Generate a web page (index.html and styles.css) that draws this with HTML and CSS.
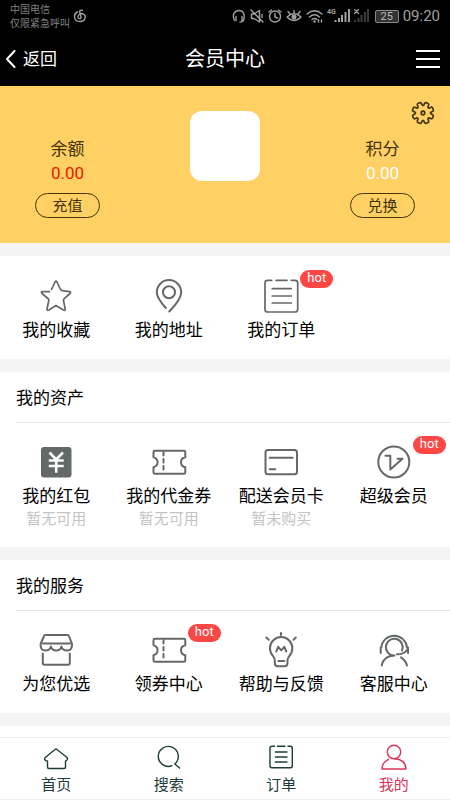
FILE: index.html
```html
<!DOCTYPE html>
<html lang="zh-CN">
<head>
<meta charset="utf-8">
<meta name="viewport" content="width=device-width, initial-scale=1">
<title>会员中心</title>
<link rel="stylesheet" href="styles.css">
</head>
<body>
<svg class="symbols" aria-hidden="true">
  <symbol id="ticket" viewBox="0 0 36 36">
    <path d="M4 6.7H33Q34.3 6.7 34.3 8V13.2Q30 14.2 30 18.2T34.3 23.2V28.4Q34.3 29.7 33 29.7H4Q2.5 29.7 2.5 28.4V23.2Q6.6 22 6.6 18.2T2.5 13.2V8Q2.5 6.7 4 6.7Z"/>
    <path d="M12.5 8V29" stroke-dasharray="3.5 3.5"/>
  </symbol>
</svg>

<div class="status">
  <div class="carrier"><span>中国电信</span><span>仅限紧急呼叫</span></div>
  <svg class="music" width="14" height="14" viewBox="0 0 14 14"><path d="M9.500 1.500C7.500.5 6.300 1.800 6.800 3.500L8 8.200C8.200 10.200 5 10.200 5 8C5 5.800 7 4.500 9 4.500C14 5.500 13 12.500 7 12.500C.5 12.500 0 5 4.500 3"/></svg>
  <div class="signals">
    <svg width="14" height="14" viewBox="0 0 14 14"><path d="M2.500 11.500C-.5 5 3 1.500 7 1.500S13.500 5 11.500 11.500Q10.500 13 8 13M4 7.500V11.500M10 7.500V11.500"/></svg>
    <svg width="14" height="14" viewBox="0 0 14 14"><path d="M1.500 5V9.500H4L9.500 13V1.500L4 5ZM1 1L13 13M12 5.500V8.500"/></svg>
    <svg width="14" height="14" viewBox="0 0 14 14"><circle cx="7" cy="7.500" r="5.500"/><path d="M7 4.500V8L9.500 9M1 3L3.500 1M13 3L10.500 1"/></svg>
    <svg width="16" height="14" viewBox="0 0 16 14"><path d="M1 8Q8 1.500 15 8Q8 15 1 8ZM8 4.500V1.500M4 5L2 2.500M12 5L14 2.500"/><circle class="solid" cx="8" cy="8" r="2.500"/></svg>
    <svg width="17" height="14" viewBox="0 0 17 14"><path d="M1 5Q8.500 -1.500 16 5M3.500 8Q8.500 3.500 13.500 8M6 10.500Q8.500 8.500 11 10.500"/><circle class="solid" cx="8.500" cy="12.500" r="1.200"/><path d="M12.500 11V13M15.500 11V13"/></svg>
    <svg width="23" height="14" viewBox="0 0 23 14"><text x="0" y="5">4G</text><path class="bar" d="M8.500 11V13M12 9V13M15 6V13M18.500 3V13M22 0V13"/></svg>
    <svg class="off" width="15" height="14" viewBox="0 0 15 14"><path class="bar" d="M1 11V13M4.500 9V13M7.500 6V13M11 3V13M14 0V13"/><path class="cross" d="M.5 .5L4.500 4.500M4.500 .5L.5 4.500"/></svg>
    <span class="battery">25</span>
    <time>09:20</time>
  </div>
</div>

<header class="topbar">
  <a class="back" href="#"><svg width="11" height="18" viewBox="0 0 11 18"><path d="M9.500 1L2 9L9.500 17"/></svg>返回</a>
  <h1>会员中心</h1>
  <button class="menu" type="button" aria-label="菜单"><svg width="24" height="18" viewBox="0 0 24 18"><path d="M0 1H24M0 9H24M0 17H24"/></svg></button>
</header>

<main>
  <section class="hero">
    <div class="account">
      <span>余额</span><strong class="money">0.00</strong><button type="button">充值</button>
    </div>
    <div class="avatar"></div>
    <div class="account">
      <span>积分</span><strong>0.00</strong><button type="button">兑换</button>
    </div>
    <button class="settings" type="button" aria-label="设置">
      <svg width="24" height="24" viewBox="-12 -12 24 24">
        <path id="tooth" transform="rotate(22.5)" d="M-2.900 -7C-1.600 -7.400 -2.400 -8.500 -2.200 -9.700Q-2 -10.900 0 -10.900T2.200 -9.700C2.400 -8.500 1.600 -7.400 2.900 -7"/>
        <use href="#tooth" transform="rotate(45)"/><use href="#tooth" transform="rotate(90)"/><use href="#tooth" transform="rotate(135)"/><use href="#tooth" transform="rotate(180)"/><use href="#tooth" transform="rotate(225)"/><use href="#tooth" transform="rotate(270)"/><use href="#tooth" transform="rotate(315)"/>
        <circle r="1.800"/></svg>
    </button>
  </section>

  <section class="group">
    <div class="grid first">
      <a class="item" href="#"><span class="icon"><svg class="thin" viewBox="0 0 36 36"><path d="M11.500 13.700L4.500 13.700Q2.500 14 4 15.500L10.500 21Q11 21.500 10.800 22.500L9 31Q9 33 11 32L18 27.500L25.500 32Q27.500 33 27.200 31L25.500 22.500Q25.300 21.500 26 20.800L32 15.500Q33.500 14 31.500 13.600L24 12.700L22.500 11.500L19 4Q18 2.200 17 4L13.500 11.500"/></svg></span>我的收藏</a>
      <a class="item" href="#"><span class="icon"><svg viewBox="0 0 36 36"><path d="M14.800 30Q5.800 20 5.800 14.300A12.200 12.200 0 0 1 30.200 14.300Q30.200 21.500 18.300 33.500"/><circle cx="18" cy="14.300" r="6"/></svg></span>我的地址</a>
      <a class="item" href="#"><span class="icon"><svg class="thin" viewBox="0 0 36 36"><path d="M8.700 2.300H4.500Q2 2.300 2 4.800V31.500Q2 34 4.500 34H32Q34.700 34 34.700 31.500V4.800Q34.700 2.300 32 2.300H28.300M13 2.300H24M9.300 10.700H28.300M9.300 18H28.300M9.300 25H28.300"/></svg><b class="badge">hot</b></span>我的订单</a>
    </div>
  </section>

  <section class="group">
    <h2>我的资产</h2>
    <div class="grid">
      <a class="item" href="#"><span class="icon"><svg viewBox="0 0 36 36"><rect class="solid" x="3" y="3" width="30.500" height="30.500" rx="3"/><path class="yen" d="M11.500 8.500L18.200 15.500L25 8.500M10.800 16.500H25.700M10.800 22H25.700M18.200 15V28.700"/></svg></span>我的红包<small>暂无可用</small></a>
      <a class="item" href="#"><span class="icon"><svg><use href="#ticket"/></svg></span>我的代金券<small>暂无可用</small></a>
      <a class="item" href="#"><span class="icon"><svg viewBox="0 0 36 36"><rect x="2.500" y="6" width="31.500" height="24.300" rx="2.500"/><path d="M6.700 13.700H29.700M6.700 25.300H12.300"/></svg></span>配送会员卡<small>暂未购买</small></a>
      <a class="item" href="#"><span class="icon"><svg viewBox="0 0 36 36"><circle cx="17.800" cy="18" r="15.500"/><path d="M9.500 11.800H14.300V25.500L26.500 14.700H21.500"/></svg><b class="badge">hot</b></span>超级会员</a>
    </div>
  </section>

  <section class="group">
    <h2>我的服务</h2>
    <div class="grid">
      <a class="item" href="#"><span class="icon"><svg viewBox="0 0 36 36"><path d="M2.600 12L5.800 4.500Q6.300 3 7.500 3H29.500Q30.700 3 31.200 4.500L34 12Q34.500 18.500 29 18.500Q24.500 18.500 23.400 14.500Q22.500 18.500 18.200 18.500T12.900 14.500Q12 18.500 7.500 18.500Q2 18.500 2.600 12ZM5 11.500H32M4.800 21.500V31Q4.800 32.700 6.500 32.700H30Q31.800 32.700 31.800 31V21.500"/></svg></span>为您优选</a>
      <a class="item" href="#"><span class="icon"><svg><use href="#ticket"/></svg><b class="badge">hot</b></span>领券中心</a>
      <a class="item" href="#"><span class="icon"><svg viewBox="0 0 36 36"><path d="M18 1V3M3.300 5.500L5.700 7.700M32.800 5.500L30.500 7.700M11.800 31V28Q11.800 26.500 10 24A11.200 11.200 0 1 1 26.300 24Q24.500 26.500 24.500 28V31Q24.500 34.200 21.500 34.200H15Q11.800 34.200 11.800 31M15.300 29H21.300M13.300 19.500L15.200 14.800L18.300 18.300L21.300 14.800L23.300 19.500"/></svg></span>帮助与反馈</a>
      <a class="item" href="#"><span class="icon"><svg viewBox="0 0 36 36"><path d="M4.700 21V15.500H5.300A12.900 12.900 0 0 1 31 15.500H32V21M31 18Q28 22.300 21 22.300M5.700 33.500Q7.500 24 18.500 23.600A8.400 8.400 0 1 1 26 18.500M25 25.300Q29.500 28 31 33.500"/></svg></span>客服中心</a>
    </div>
  </section>

  <section class="group tail"></section>
</main>

<nav class="tabs">
  <a href="#"><svg viewBox="0 0 26 26"><path d="M12 5.500Q13 4.500 14 5.500L24 13.500Q25.500 15.500 22.500 17.200V23Q22.500 24.500 21 24.500H6Q4.500 24.500 4.500 23V17.200Q.5 16 2 13.800Z"/></svg>首页</a>
  <a href="#"><svg viewBox="0 0 26 26"><path d="M16 21.700A10 10 0 1 1 18.800 20L23.600 24"/></svg>搜索</a>
  <a href="#"><svg viewBox="0 0 26 26"><path d="M6.500 2.300H4Q2 2.300 2 4.300V21.700Q2 23.700 4 23.700H22.300Q24.300 23.700 24.300 21.700V4.300Q24.300 2.300 22.300 2.300H20M9.500 2.300H17M7.400 8H19M7.400 13H19M7.400 18H19"/></svg>订单</a>
  <a class="active" href="#" aria-current="page"><svg viewBox="0 0 26 26"><circle cx="13" cy="8" r="6.700"/><path d="M7.500 15.300Q1 18.500 1 25H25Q24.500 15.500 13.500 14.800"/></svg>我的</a>
</nav>
</body>
</html>
```
FILE: styles.css
```css
* { box-sizing: border-box; }
body {
  margin: 0;
  min-height: 100vh;
  background: #f4f4f4;
  color: #000;
  font-family: Roboto, "Noto Sans CJK SC", sans-serif;
  font-size: 17px;
  line-height: 24px;
}
a { color: inherit; text-decoration: none; }
button {
  padding: 0;
  border: 0;
  background: none;
  color: inherit;
  font: inherit;
}
svg {
  display: block;
  fill: none;
  stroke: currentColor;
  stroke-width: 2;
  stroke-linecap: round;
  stroke-linejoin: round;
}
.symbols { position: absolute; width: 0; height: 0; }

.status {
  display: flex;
  align-items: center;
  height: 32px;
  padding: 0 10px;
  background: #000;
  color: #a0a0a0;
}
.status svg { stroke-width: 1.4; }
.status .solid { fill: currentColor; stroke: none; }
.status .bar { stroke-width: 2; stroke-linecap: butt; }
.status text { fill: currentColor; stroke: none; font-size: 7px; font-weight: 700; }
.carrier {
  display: flex;
  flex-direction: column;
  padding-top: 1px;
  color: #808080;
  font-size: 10px;
  line-height: 14px;
}
.music { margin-left: 3px; }
.signals {
  display: flex;
  align-items: center;
  gap: 4px;
  margin-left: auto;
}
.off .bar { stroke: #3c3c3c; }
.off .cross { stroke-width: 1.3; }
.battery {
  width: 24px;
  height: 13px;
  margin-left: 2px;
  border: 1px solid #8a8a8a;
  border-radius: 2px;
  background: #333;
  color: #bbb;
  font-size: 11px;
  line-height: 11px;
  text-align: center;
}
.status time { font-size: 15px; }

.topbar {
  display: grid;
  grid-template-columns: 1fr auto 1fr;
  align-items: center;
  height: 54px;
  padding: 0 10px 0 5px;
  background: #000;
  color: #fff;
}
.topbar h1 { margin: 0; padding-left: 5px; font-size: 20px; font-weight: 400; }
.back { display: flex; align-items: center; gap: 7px; }
.menu { justify-self: end; }
.menu svg { stroke-linecap: butt; }

.hero {
  position: relative;
  display: flex;
  justify-content: space-between;
  align-items: flex-start;
  padding: 25px 35px;
  background: #ffd063;
  color: #44350f;
}
.account {
  display: flex;
  flex-direction: column;
  align-items: center;
  width: 65px;
  padding-top: 26px;
}
.account strong { color: #fff; font-weight: 400; }
.account .money { color: #e61a00; }
.account button {
  width: 100%;
  height: 25px;
  margin-top: 8px;
  border: 1px solid #44350f;
  border-radius: 13px;
  font-size: 15px;
  line-height: 22px;
}
.avatar { width: 70px; height: 70px; border-radius: 12px; background: #fff; }
.settings { position: absolute; top: 15px; right: 15px; }
.settings svg { stroke-width: 1.7; }

.group { margin-top: 13px; background: #fff; }
.group h2 {
  margin: 0 0 0 16px;
  padding-top: 2px;
  border-bottom: 1px solid #e6e6e6;
  font-size: 17px;
  font-weight: 400;
  line-height: 48px;
}
.grid {
  display: grid;
  grid-template-columns: repeat(4, 1fr);
  padding: 21px 0 17px;
}
.grid.first { padding-top: 22px; }
.item { display: flex; flex-direction: column; align-items: center; }
.item small { color: #c4c4c4; font-size: 15px; line-height: 22px; }
.icon { position: relative; margin-bottom: 4px; color: #656868; }
.icon svg { width: 36px; height: 36px; }
.icon .thin { stroke-width: 1.7; }
.icon .solid { fill: currentColor; stroke: none; }
.icon .yen { stroke: #fff; stroke-width: 2.6; stroke-linecap: butt; }
.badge {
  position: absolute;
  top: -8px;
  left: 37px;
  width: 33px;
  height: 18px;
  border-radius: 9px;
  background: #fd4744;
  color: #fff;
  font-size: 13px;
  font-weight: 400;
  line-height: 15px;
  text-align: center;
}
.tail { height: 74px; }

.tabs {
  position: fixed;
  right: 0;
  bottom: 0;
  left: 0;
  display: grid;
  grid-template-columns: repeat(4, 1fr);
  padding: 6px 0 4px;
  border-top: 1px solid #f0f0f0;
  border-bottom: 1px solid #f0f0f0;
  background: #fff;
  color: #203b39;
  font-size: 15px;
  line-height: 20px;
}
.tabs a { display: flex; flex-direction: column; align-items: center; gap: 5px; }
.tabs svg { width: 26px; height: 26px; stroke-width: 1.4; }
.tabs .active { color: #dc3358; }
```
